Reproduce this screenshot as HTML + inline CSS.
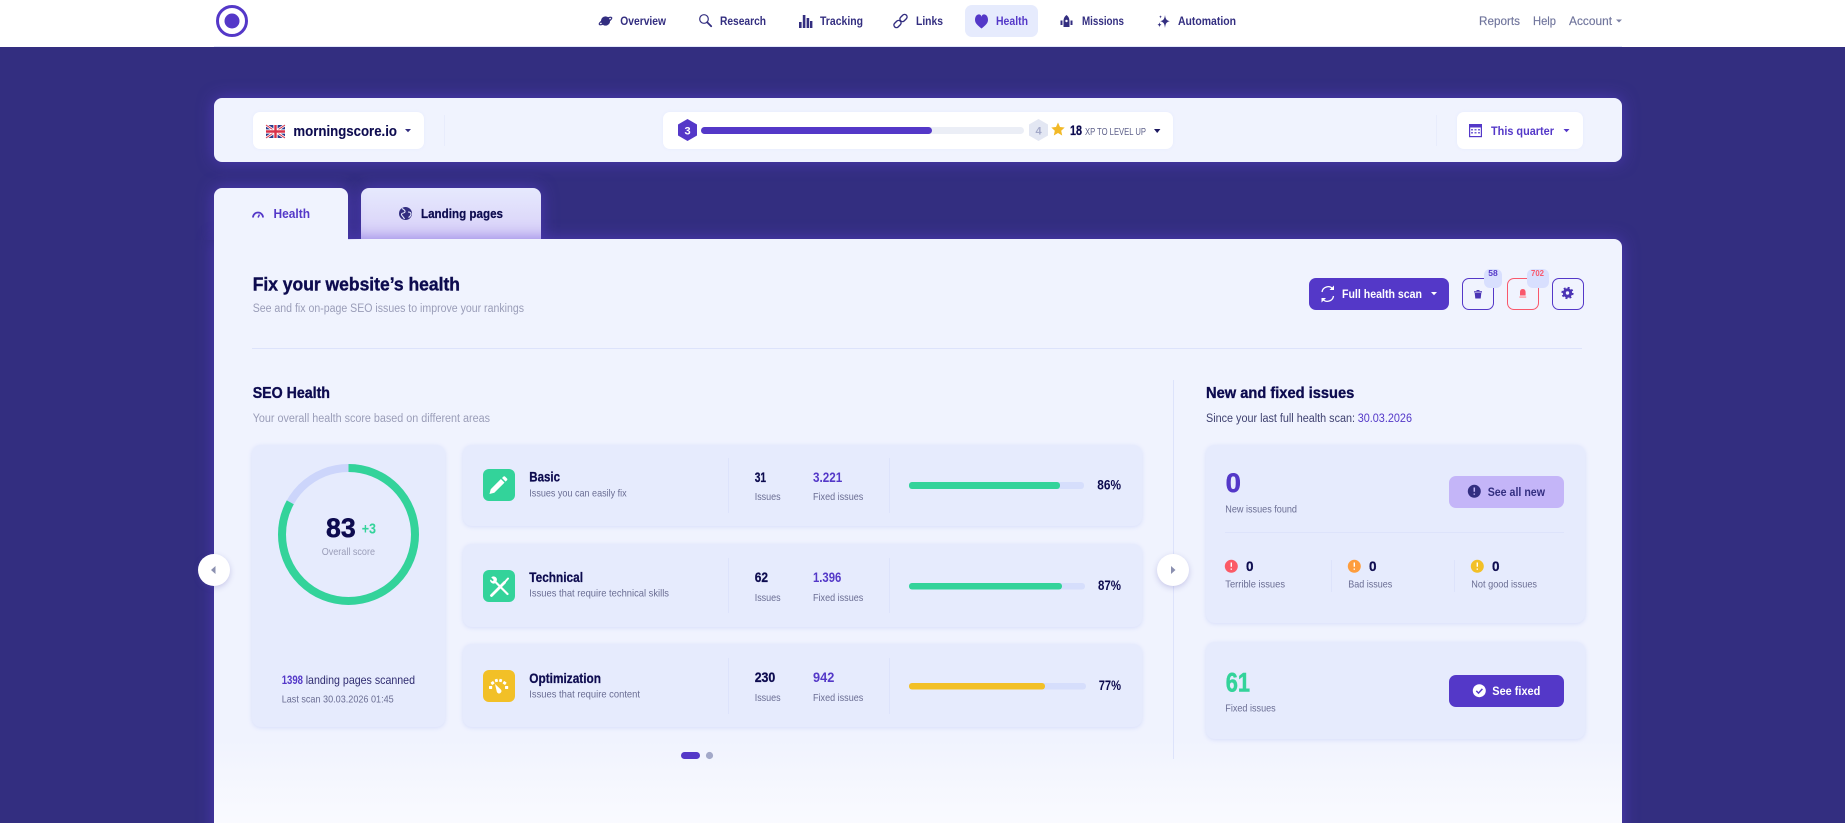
<!DOCTYPE html>
<html lang="en"><head><meta charset="utf-8"><title>Health</title>
<style>
html,body{margin:0;padding:0;width:1845px;height:823px;overflow:hidden;background:#332e80}
body{position:relative;font-family:"Liberation Sans",sans-serif}
.b{position:absolute;box-sizing:border-box}
.g{box-shadow:0 0 16px rgba(95,65,215,.6)}
.w{background:#fff;border-radius:7px;box-shadow:0 0 3px #e6ebfd}
.c{background:#e6ebfd;border-radius:9px;box-shadow:0 1px 4px rgba(205,214,250,.75)}
svg{position:absolute;left:0;top:0}
text{font-family:"Liberation Sans",sans-serif}
.d{fill:#0d0b4f;font-weight:700;stroke:#0d0b4f;stroke-width:.25}
.n{fill:#332e80;font-size:12px;font-weight:700}
.m{fill:#70759c;font-size:12px;stroke:#70759c;stroke-width:.15}
.s{fill:#9a9db8;font-size:11.5px}
.l{fill:#6a6d93;font-size:10.5px}
.p{fill:#5438c8;font-weight:700}
</style></head><body>
<div class="b" style="left:0;top:0;width:1845px;height:47px;background:#fff"></div>
<div class="b" style="left:214px;top:46px;width:1408px;height:1px;background:#e3e8fb"></div>
<div class="b" style="left:965px;top:5px;width:73px;height:32px;background:#e6ebfd;border-radius:7px"></div>

<div class="b g" style="left:214px;top:98px;width:1408px;height:64px;background:#f0f3fe;border-radius:8px"></div>
<div class="b w" style="left:253px;top:112px;width:171px;height:37px"></div>
<div class="b w" style="left:663px;top:112px;width:510px;height:37px"></div>
<div class="b w" style="left:1457px;top:112px;width:126px;height:37px"></div>
<div class="b" style="left:444px;top:115px;width:1px;height:31px;background:#e8ecfc"></div>
<div class="b" style="left:1436px;top:115px;width:1px;height:31px;background:#e8ecfc"></div>

<div class="b g" style="left:361px;top:188px;width:180px;height:51px;border-radius:8px 8px 0 0;background:linear-gradient(#e6e9fd,#d8d0f8)"></div>
<div class="b g" style="left:214px;top:239px;width:1408px;height:600px;border-radius:0 8px 0 0;background:linear-gradient(#f0f3fe 0,#f0f3fe 500px,#fafbff 590px)"></div>
<div class="b g" style="left:214px;top:188px;width:134px;height:52px;border-radius:8px 8px 0 0;background:#f0f3fe;clip-path:inset(-30px -30px 0 -30px)"></div>

<div class="b" style="left:1309px;top:278px;width:140px;height:32px;background:#5438c8;border-radius:7px"></div>
<div class="b" style="left:1462px;top:278px;width:32px;height:32px;border:1.5px solid #5438c8;border-radius:7px"></div>
<div class="b" style="left:1507px;top:278px;width:32px;height:32px;border:1.5px solid #f9586c;border-radius:7px"></div>
<div class="b" style="left:1552px;top:278px;width:32px;height:32px;border:1.5px solid #5438c8;border-radius:7px"></div>
<div class="b" style="left:1484px;top:269px;width:18px;height:19px;background:#d8dffe;border-radius:6px"></div>
<div class="b" style="left:1527px;top:269px;width:22px;height:19px;background:#d8dffe;border-radius:6px"></div>

<div class="b" style="left:252px;top:348px;width:1330px;height:1px;background:#dde3fb"></div>
<div class="b" style="left:1173px;top:380px;width:1px;height:379px;background:#dde3fb"></div>

<div class="b c" style="left:252px;top:445px;width:193px;height:282px"></div>
<div class="b c" style="left:463px;top:445px;width:679px;height:81px"></div>
<div class="b c" style="left:463px;top:544px;width:679px;height:83px"></div>
<div class="b c" style="left:463px;top:644px;width:679px;height:83px"></div>
<div class="b c" style="left:1206px;top:445px;width:379px;height:178px"></div>
<div class="b c" style="left:1206px;top:642px;width:379px;height:97px"></div>

<div class="b" style="left:1449px;top:476px;width:115px;height:32px;background:#c4b5f8;border-radius:7px"></div>
<div class="b" style="left:1449px;top:675px;width:115px;height:32px;background:#5438c8;border-radius:7px"></div>

<div class="b" style="left:198px;top:554px;width:32px;height:32px;background:#fff;border-radius:50%;box-shadow:0 2px 6px rgba(80,70,170,.25)"></div>
<div class="b" style="left:1157px;top:554px;width:32px;height:32px;background:#fff;border-radius:50%;box-shadow:0 2px 6px rgba(80,70,170,.25)"></div>

<svg width="1845" height="823" viewBox="0 0 1845 823" xmlns="http://www.w3.org/2000/svg">
<!-- logo -->
<circle cx="232" cy="21" r="14.5" fill="none" stroke="#5438c8" stroke-width="3"/>
<circle cx="232" cy="21" r="7.5" fill="#5438c8"/>

<!-- nav icons -->
<g fill="#332e80">
<circle cx="605.500" cy="21" r="4.600"/><ellipse cx="605.500" cy="21" rx="7" ry="2" transform="rotate(-28 605.500 21)" fill="none" stroke="#332e80" stroke-width="1.200"/>
<circle cx="704" cy="19" r="4.300" fill="none" stroke="#332e80" stroke-width="1.200"/><path d="M707.200 22.200l4 4" stroke="#332e80" stroke-width="1.800" stroke-linecap="round"/>
<rect x="799" y="22" width="2.600" height="6"/><rect x="802.800" y="15" width="2.600" height="13"/><rect x="806.600" y="18" width="2.600" height="10"/><rect x="810" y="21" width="2.400" height="7"/>
<g fill="none" stroke="#332e80" stroke-width="1.400"><rect x="893.500" y="21.500" width="8" height="5" rx="2.500" transform="rotate(-45 897.500 24)"/><rect x="899.500" y="15.500" width="8" height="5" rx="2.500" transform="rotate(-45 903.500 18)"/></g>
<path d="M975 19c0-7 6.500-7 6.500-2.800C981.500 12 988 12 988 19c0 3.600-3.500 6-6.500 8.500C978.500 25 975 22.600 975 19z" fill="#5438c8" transform="translate(0 1)"/>
<path d="M1066.500 15c2.500 2 3 4 3 7v5h-6v-5c0-3 .5-5 3-7zM1060.500 20.500h2v4.500h-2zM1070.500 20.500h2v4.500h-2z"/><circle cx="1066.500" cy="21" r="1.200" fill="#fff"/>
<path d="M1165 15c.5 4 1.500 5.500 4.800 6.200-3.300.7-4.300 2.200-4.800 6.800-.5-4.600-1.500-6.100-4.800-6.800 3.300-.7 4.300-2.200 4.800-6.200zM1159.500 22c.2 1.800.6 2.300 2 2.700-1.400.4-1.800.9-2 2.800-.2-1.900-.6-2.400-2-2.800 1.400-.4 1.800-.9 2-2.700zM1160.500 15c.1 1.200.4 1.500 1.300 1.800-.9.300-1.200.6-1.300 1.800-.1-1.200-.4-1.500-1.300-1.800.9-.3 1.200-.6 1.300-1.800z"/>
</g>
<text x="620.300" y="25" class="n" textLength="45.700" lengthAdjust="spacingAndGlyphs">Overview</text>
<text x="720" y="25" class="n" textLength="46" lengthAdjust="spacingAndGlyphs">Research</text>
<text x="820" y="25" class="n" textLength="43" lengthAdjust="spacingAndGlyphs">Tracking</text>
<text x="916" y="25" class="n" textLength="27" lengthAdjust="spacingAndGlyphs">Links</text>
<text x="996" y="25" class="n" style="fill:#5438c8" textLength="32" lengthAdjust="spacingAndGlyphs">Health</text>
<text x="1082" y="25" class="n" textLength="42" lengthAdjust="spacingAndGlyphs">Missions</text>
<text x="1178" y="25" class="n" textLength="58" lengthAdjust="spacingAndGlyphs">Automation</text>
<text x="1479" y="25" class="m" textLength="41" lengthAdjust="spacingAndGlyphs">Reports</text>
<text x="1533" y="25" class="m" textLength="23" lengthAdjust="spacingAndGlyphs">Help</text>
<text x="1569" y="25" class="m" textLength="43" lengthAdjust="spacingAndGlyphs">Account</text>
<path d="M1616 19.500h6l-3 3z" fill="#7d82a6"/>

<!-- flag -->
<g>
<rect x="266" y="125" width="19" height="13" fill="#2b3a8c"/>
<path d="M266 125l19 13M285 125l-19 13" stroke="#fff" stroke-width="2.600"/>
<path d="M266 125l19 13M285 125l-19 13" stroke="#d8324a" stroke-width="1"/>
<path d="M275.500 125v13M266 131.500h19" stroke="#fff" stroke-width="4.200"/>
<path d="M275.500 125v13M266 131.500h19" stroke="#d8324a" stroke-width="2.400"/>
</g>
<text x="293.400" y="136" class="d" style="font-size:15px;stroke-width:.1" textLength="103.600" lengthAdjust="spacingAndGlyphs">morningscore.io</text>
<path d="M405 129h6l-3 3.200z" fill="#332e80"/>

<!-- xp -->
<path d="M687.500 119l9.500 5.500v11l-9.500 5.500-9.500-5.500v-11z" fill="#5438c8"/>
<text x="687.500" y="134.500" text-anchor="middle" fill="#fff" style="font-size:11px;font-weight:700">3</text>
<rect x="701" y="127" width="323" height="7" rx="3.500" fill="#ebeef6"/>
<rect x="701" y="127" width="231" height="7" rx="3.500" fill="#5438c8"/>
<path d="M1038.500 119l9.500 5.500v11l-9.500 5.500-9.500-5.500v-11z" fill="#e3e7f3"/>
<text x="1038.500" y="134.500" text-anchor="middle" fill="#a3a9c9" style="font-size:11px;font-weight:700">4</text>
<path d="M1058 122.500l2 4.500 4.700.5-3.500 3.200 1 4.800-4.200-2.500-4.200 2.500 1-4.800-3.500-3.200 4.700-.5z" fill="#f2b927"/>
<text x="1070" y="135" class="d" style="font-size:13.500px" textLength="12" lengthAdjust="spacingAndGlyphs">18</text>
<text x="1085" y="135" fill="#5e618a" style="font-size:10.500px" textLength="61" lengthAdjust="spacingAndGlyphs">XP TO LEVEL UP</text>
<path d="M1154 129h6.400l-3.200 4z" fill="#1b1860"/>

<!-- calendar -->
<g fill="#7a64d8"><rect x="1469.600" y="125" width="11.800" height="11.600" fill="none" stroke="#5438c8" stroke-width="1.200"/><rect x="1469" y="124" width="13" height="3.500" fill="#5438c8"/><rect x="1471" y="129" width="2" height="1.500"/><rect x="1474.500" y="129" width="2" height="1.500"/><rect x="1478" y="129" width="2" height="1.500"/><rect x="1471" y="132" width="2" height="1.500"/><rect x="1474.500" y="132" width="2" height="1.500"/><rect x="1478" y="132" width="2" height="1.500"/></g>
<text x="1491" y="134.800" class="p" style="font-size:12px" textLength="63" lengthAdjust="spacingAndGlyphs">This quarter</text>
<path d="M1563.500 129h6l-3 3.200z" fill="#5438c8"/>

<!-- tabs -->
<path d="M253 217.500a5 5 0 0 1 10 0" fill="none" stroke="#5438c8" stroke-width="1.800"/><path d="M258 217.500l1.500-3" stroke="#5438c8" stroke-width="1.500"/>
<text x="273.500" y="218" class="p" style="font-size:12.500px" textLength="36.500" lengthAdjust="spacingAndGlyphs">Health</text>
<circle cx="405.500" cy="213.500" r="6.500" fill="#332e80"/><path d="M402 208.500c2 1 3.500 2 3 3.500s-3 .5-3.500 2 2 2.500 3 5M408 212c1.500 0 3 .5 3 2s-1.500 3-2.500 3.500" fill="none" stroke="#e6e9fd" stroke-width="1.100"/>
<text x="421" y="218" class="d" style="font-size:12.500px" textLength="82" lengthAdjust="spacingAndGlyphs">Landing pages</text>

<!-- header -->
<text x="252.700" y="290.700" class="d" style="font-size:18.500px;stroke-width:.4" textLength="207.300" lengthAdjust="spacingAndGlyphs">Fix your website’s health</text>
<text x="252.700" y="312" class="s" textLength="271.300" lengthAdjust="spacingAndGlyphs">See and fix on-page SEO issues to improve your rankings</text>

<!-- scan button -->
<g fill="none" stroke="#fff" stroke-width="1.300"><path d="M1322 292a6.200 6.200 0 0 1 10.800-3.200"/><path d="M1333.500 296a6.200 6.200 0 0 1-10.800 3.200"/></g>
<path d="M1334 285.500v4.500h-4.500zM1321.500 302.500v-4.500h4.500z" fill="#fff"/>
<text x="1342" y="298" fill="#fff" style="font-size:12px;font-weight:700" textLength="80" lengthAdjust="spacingAndGlyphs">Full health scan</text>
<path d="M1431 292h6l-3 3.200z" fill="#fff"/>
<path d="M1474 291.300h8v1.200h-8zM1476.500 290h3v1h-3zM1474.700 293h6.600l-.6 5.500h-5.400z" fill="#4a33b5"/>
<path d="M1522.800 289c2.100 0 2.800 1.500 2.800 3.500v3h-5.600v-3c0-2 .7-3.500 2.800-3.500z" fill="#f9586c"/><rect x="1519.400" y="296.300" width="6.800" height="1.600" fill="#ffa4ad"/>
<circle cx="1567.500" cy="293" r="4.700" fill="#4a33b5"/><circle cx="1567.500" cy="293" r="5.200" fill="none" stroke="#4a33b5" stroke-width="1.800" stroke-dasharray="2 2.080"/><circle cx="1567.500" cy="293" r="1.700" fill="#f0f3fe"/>
<text x="1493" y="276" text-anchor="middle" fill="#5438c8" style="font-size:8.500px;font-weight:700">58</text>
<text x="1537.500" y="276" text-anchor="middle" fill="#f9586c" style="font-size:8.500px;font-weight:700" textLength="13" lengthAdjust="spacingAndGlyphs">702</text>

<!-- SEO Health -->
<text x="252.700" y="398" class="d" style="font-size:16px;stroke-width:.35" textLength="77.300" lengthAdjust="spacingAndGlyphs">SEO Health</text>
<text x="252.700" y="422" class="s" textLength="237.300" lengthAdjust="spacingAndGlyphs">Your overall health score based on different areas</text>

<circle cx="348.500" cy="534.500" r="66.500" fill="none" stroke="#ccd5fb" stroke-width="8"/>
<circle cx="348.500" cy="534.500" r="66.500" fill="none" stroke="#33d39a" stroke-width="8" stroke-dasharray="346.800 417.800" transform="rotate(-90 348.500 534.500)"/>
<text x="326" y="537" class="d" style="font-size:27px;stroke-width:.5" textLength="29.700" lengthAdjust="spacingAndGlyphs">83</text>
<text x="361.700" y="533.700" fill="#33d39a" style="font-size:14.500px;font-weight:700" textLength="14.300" lengthAdjust="spacingAndGlyphs">+3</text>
<text x="321.700" y="555" class="s" style="font-size:10.500px" textLength="53.300" lengthAdjust="spacingAndGlyphs">Overall score</text>
<text x="281.700" y="684" class="p" style="font-size:12px" textLength="21.300" lengthAdjust="spacingAndGlyphs">1398</text>
<text x="305.700" y="684" fill="#2f2c70" style="font-size:12px" textLength="109.300" lengthAdjust="spacingAndGlyphs">landing pages scanned</text>
<text x="281.700" y="702.700" class="l" textLength="112" lengthAdjust="spacingAndGlyphs">Last scan 30.03.2026 01:45</text>

<!-- rows: icons -->
<rect x="483" y="469" width="32" height="32" rx="6" fill="#33d39a"/>
<path d="M489.500 494l1.200-4.800 10.200-10.200 3.600 3.600-10.200 10.200zM502 478l1.400-1.400c.5-.5 1.200-.5 1.700 0l1.900 1.900c.5.500.5 1.200 0 1.700l-1.400 1.400z" fill="#fff"/>
<rect x="483" y="570" width="32" height="32" rx="6" fill="#33d39a"/>
<g fill="none" stroke="#fff" stroke-linecap="round"><path d="M491.500 595.500l13-13" stroke-width="2.800"/><path d="M495 581.500l12.500 12.500" stroke-width="2.200"/><path d="M495.800 577.300a3.600 3.600 0 0 0-4.600 0l2.500 2.600-.8 1.400-2.800-1.800a3.600 3.600 0 0 0 4.400 4l1.800-1.800a3.600 3.600 0 0 0-.5-4.400z" fill="#fff" stroke="none"/><path d="M504 583l4-4.500" stroke-width="2"/></g>
<rect x="483" y="670" width="32" height="32" rx="6" fill="#f2c027"/>
<g fill="#fff"><rect x="489" y="686" width="3.200" height="3" rx=".6"/><rect x="491" y="681.500" width="3.200" height="3" rx=".6" transform="rotate(-35 492.600 683)"/><rect x="495" y="679" width="2.800" height="3" rx=".6" transform="rotate(-15 496.400 680.500)"/><rect x="499.200" y="679" width="2.800" height="3" rx=".6" transform="rotate(15 500.600 680.500)"/><rect x="503" y="681.500" width="3.200" height="3" rx=".6" transform="rotate(35 504.600 683)"/><rect x="505" y="686" width="3.200" height="3" rx=".6"/><path d="M495 684l5.600 5.200a2.400 2.400 0 1 1-3.800 2.600z"/></g>

<!-- rows: titles -->
<text x="529.300" y="481.700" class="d" style="font-size:13.500px" textLength="30.700" lengthAdjust="spacingAndGlyphs">Basic</text>
<text x="529.300" y="496.700" class="l" textLength="97.400" lengthAdjust="spacingAndGlyphs">Issues you can easily fix</text>
<text x="529.300" y="582" class="d" style="font-size:13.500px" textLength="53.700" lengthAdjust="spacingAndGlyphs">Technical</text>
<text x="529.300" y="596.700" class="l" textLength="139.700" lengthAdjust="spacingAndGlyphs">Issues that require technical skills</text>
<text x="529.300" y="683" class="d" style="font-size:13.500px" textLength="71.700" lengthAdjust="spacingAndGlyphs">Optimization</text>
<text x="529.300" y="697.700" class="l" textLength="110.700" lengthAdjust="spacingAndGlyphs">Issues that require content</text>

<g fill="#dde3fb"><rect x="728" y="458" width="1" height="55"/><rect x="889" y="458" width="1" height="55"/><rect x="728" y="558" width="1" height="55"/><rect x="889" y="558" width="1" height="55"/><rect x="728" y="658" width="1" height="56"/><rect x="889" y="658" width="1" height="56"/></g>

<!-- rows: numbers -->
<text x="754.700" y="482" class="d" style="font-size:13.500px" textLength="11.300" lengthAdjust="spacingAndGlyphs">31</text>
<text x="813" y="482" class="p" style="font-size:13.500px" textLength="29.300" lengthAdjust="spacingAndGlyphs">3.221</text>
<text x="754.700" y="500" class="l" textLength="26" lengthAdjust="spacingAndGlyphs">Issues</text>
<text x="813" y="500" class="l" textLength="50.300" lengthAdjust="spacingAndGlyphs">Fixed issues</text>
<text x="754.700" y="582" class="d" style="font-size:13.500px" textLength="13.300" lengthAdjust="spacingAndGlyphs">62</text>
<text x="813" y="582" class="p" style="font-size:13.500px" textLength="28.300" lengthAdjust="spacingAndGlyphs">1.396</text>
<text x="754.700" y="601" class="l" textLength="26" lengthAdjust="spacingAndGlyphs">Issues</text>
<text x="813" y="601" class="l" textLength="50.300" lengthAdjust="spacingAndGlyphs">Fixed issues</text>
<text x="754.700" y="682" class="d" style="font-size:13.500px" textLength="20.600" lengthAdjust="spacingAndGlyphs">230</text>
<text x="813" y="682" class="p" style="font-size:13.500px" textLength="21.300" lengthAdjust="spacingAndGlyphs">942</text>
<text x="754.700" y="701" class="l" textLength="26" lengthAdjust="spacingAndGlyphs">Issues</text>
<text x="813" y="701" class="l" textLength="50.300" lengthAdjust="spacingAndGlyphs">Fixed issues</text>

<!-- bars -->
<rect x="909" y="482" width="175" height="7" rx="3" fill="#d6defc"/><rect x="909" y="482" width="151" height="7" rx="3" fill="#33d39a"/>
<rect x="909" y="583" width="176" height="6.500" rx="3" fill="#d6defc"/><rect x="909" y="583" width="153" height="6.500" rx="3" fill="#33d39a"/>
<rect x="909" y="683" width="177" height="6.500" rx="3" fill="#d6defc"/><rect x="909" y="683" width="136" height="6.500" rx="3" fill="#f2c027"/>
<text x="1097.300" y="489.700" fill="#0d0b4f" style="font-size:13.500px;font-weight:700" textLength="23.700" lengthAdjust="spacingAndGlyphs">86%</text>
<text x="1098" y="590" fill="#0d0b4f" style="font-size:13.500px;font-weight:700" textLength="23" lengthAdjust="spacingAndGlyphs">87%</text>
<text x="1098.700" y="690" fill="#0d0b4f" style="font-size:13.500px;font-weight:700" textLength="22.300" lengthAdjust="spacingAndGlyphs">77%</text>

<!-- pagination -->
<rect x="681" y="752" width="19" height="7" rx="3.500" fill="#5438c8"/>
<circle cx="709.500" cy="755.500" r="3.600" fill="#a3a9c9"/>

<!-- arrows -->
<path d="M215.500 566v8l-4.500-4z" fill="#8b90b0"/>
<path d="M1171 566v8l4.500-4z" fill="#8b90b0"/>

<!-- right column -->
<text x="1206" y="398" class="d" style="font-size:16px;stroke-width:.35" textLength="148.300" lengthAdjust="spacingAndGlyphs">New and fixed issues</text>
<text x="1206" y="422" fill="#3f4170" style="font-size:11.500px" textLength="149" lengthAdjust="spacingAndGlyphs">Since your last full health scan:</text>
<text x="1357.700" y="422" fill="#5438c8" style="font-size:11.500px" textLength="54.300" lengthAdjust="spacingAndGlyphs">30.03.2026</text>

<text x="1225.700" y="492" class="p" style="font-size:27px;stroke:#5438c8;stroke-width:.5" textLength="15.300" lengthAdjust="spacingAndGlyphs">0</text>
<text x="1225.300" y="512.700" class="l" textLength="71.700" lengthAdjust="spacingAndGlyphs">New issues found</text>
<circle cx="1474.300" cy="491.300" r="6.500" fill="#332e80"/><path d="M1474.300 487.500v4.300M1474.300 493.500v1.300" stroke="#c4b5f8" stroke-width="1.500"/>
<text x="1487.700" y="496" fill="#332e80" style="font-size:12px;font-weight:700" textLength="57.300" lengthAdjust="spacingAndGlyphs">See all new</text>

<rect x="1225" y="532" width="339" height="1" fill="#dde3fb"/>
<rect x="1331" y="560" width="1" height="32" fill="#dde3fb"/>
<rect x="1454" y="560" width="1" height="32" fill="#dde3fb"/>

<circle cx="1231.300" cy="566.300" r="6.500" fill="#fb5a66"/><path d="M1231.300 562.500v4.300M1231.300 568.500v1.300" stroke="#fff" stroke-width="1.400"/>
<circle cx="1354.300" cy="566.300" r="6.500" fill="#fe9d3d"/><path d="M1354.300 562.500v4.300M1354.300 568.500v1.300" stroke="#fff" stroke-width="1.400"/>
<circle cx="1477.300" cy="566.300" r="6.500" fill="#f2c027"/><path d="M1477.300 562.500v4.300M1477.300 568.500v1.300" stroke="#fff" stroke-width="1.400"/>
<text x="1246" y="571" class="d" style="font-size:13.500px">0</text>
<text x="1369" y="571" class="d" style="font-size:13.500px">0</text>
<text x="1492" y="571" class="d" style="font-size:13.500px">0</text>
<text x="1225.300" y="587.700" class="l" textLength="59.700" lengthAdjust="spacingAndGlyphs">Terrible issues</text>
<text x="1348.300" y="587.700" class="l" textLength="44" lengthAdjust="spacingAndGlyphs">Bad issues</text>
<text x="1471.300" y="587.700" class="l" textLength="65.700" lengthAdjust="spacingAndGlyphs">Not good issues</text>

<text x="1225.700" y="691.700" fill="#33d39a" stroke="#33d39a" stroke-width=".5" style="font-size:27px;font-weight:700" textLength="24.300" lengthAdjust="spacingAndGlyphs">61</text>
<text x="1225.300" y="711.700" class="l" textLength="50.400" lengthAdjust="spacingAndGlyphs">Fixed issues</text>
<circle cx="1479.300" cy="690.700" r="6.500" fill="#fff"/><path d="M1476.300 690.900l2.200 2.200 3.900-4.200" fill="none" stroke="#5438c8" stroke-width="1.500"/>
<text x="1492.300" y="695" fill="#fff" style="font-size:12px;font-weight:700" textLength="48" lengthAdjust="spacingAndGlyphs">See fixed</text>
</svg>
</body></html>
